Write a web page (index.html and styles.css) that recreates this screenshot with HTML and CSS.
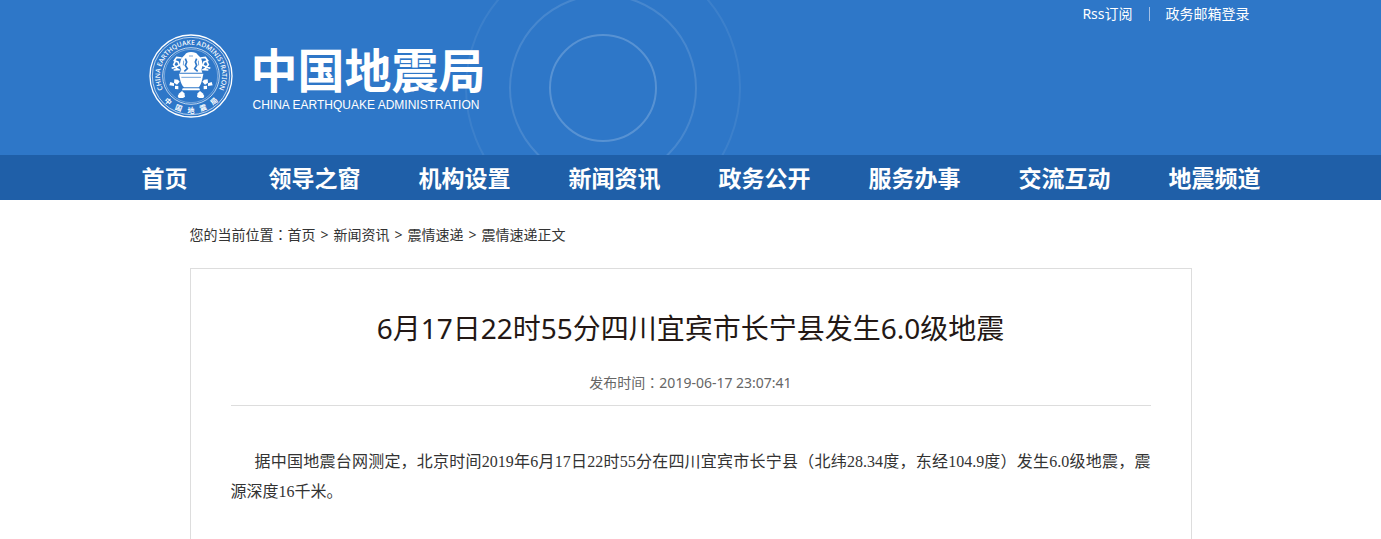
FILE: index.html
```html
<!DOCTYPE html>
<html lang="zh-CN">
<head>
<meta charset="utf-8">
<title>中国地震局</title>
<link rel="stylesheet" href="styles.css">
</head>
<body>
<header class="header">
  <svg class="ripples" viewBox="0 0 276 276" fill="none" stroke="#fff" stroke-width="2" aria-hidden="true">
    <circle cx="138" cy="138" r="53" opacity=".2"/>
    <circle cx="138" cy="138" r="93" opacity=".12"/>
    <circle cx="138" cy="138" r="137" opacity=".07"/>
  </svg>
  <div class="header-inner">
    <div class="top-links">
      <a href="#">Rss订阅</a><span class="divider"></span><a href="#">政务邮箱登录</a>
    </div>
    <a class="brand" href="#">
      <svg class="seal" viewBox="0 0 252 252" role="img" aria-label="中国地震局徽标">
        <defs>
          <path id="arc" d="M50 179 A93 93 0 1 1 202 179"/>
        </defs>
        <g fill="none" stroke="#fff">
          <circle cx="126" cy="126" r="123" stroke-width="4"/>
          <circle cx="126" cy="126" r="116" stroke-width="2"/>
          <circle cx="126" cy="126" r="85" stroke-width="3" opacity=".7"/>
          <circle cx="126" cy="126" r="80" stroke-width="2" opacity=".5"/>
        </g>
        <text class="seal-en"><textPath href="#arc" startOffset="50%" text-anchor="middle">CHINA EARTHQUAKE ADMINISTRATION</textPath></text>
        <g class="seal-cn" text-anchor="middle">
          <text x="126" y="236" transform="rotate(42 126 126)">中</text>
          <text x="126" y="236" transform="rotate(21 126 126)">国</text>
          <text x="126" y="236">地</text>
          <text x="126" y="236" transform="rotate(-21 126 126)">震</text>
          <text x="126" y="236" transform="rotate(-42 126 126)">局</text>
        </g>
        <g fill="#fff">
          <path d="M108 62 Q112 54 126 54 Q142 54 146 62 L156 72 Q164 92 157 108 L160 116 H92 L97 108 Q88 92 98 72Z"/>
          <path d="M90 119 H163 L160 135 Q155 155 149 160 H105 Q97 153 93 135Z"/>
          <path d="M101 163 H151 L153 169 H99Z"/>
          <path d="M99 171 L106 178 L108 188 L102 192 H89 L86 186 L91 178Z"/>
          <path d="M153 171 L146 178 L144 188 L150 192 H163 L166 186 L161 178Z"/>
          <path d="M76 136 L87 137 L92 143 L84 152 L75 146Z"/>
          <path d="M64 144 L75 148 L75 156 L61 154Z"/>
          <path d="M176 136 L165 137 L160 143 L168 152 L177 146Z"/>
          <path d="M188 144 L177 148 L177 156 L191 154Z"/>
          <path d="M78 155 L88 156 L88 166 L78 165Z"/>
          <path d="M174 155 L164 156 L164 166 L174 165Z"/>
        </g>
        <g fill="none" stroke="#fff" stroke-width="5">
          <path d="M98 72 L83 70 L76 80 L87 84 L91 94 L78 100 L89 107 L74 108"/>
          <path d="M154 72 L169 70 L176 80 L165 84 L161 94 L174 100 L163 107 L178 108"/>
          <path d="M80 80 L74 92 L80 99 L68 103 M172 80 L178 92 L172 99 L184 103"/>
        </g>
        <g fill="none" stroke="#2e77c8">
          <path d="M109 74 L113 84 L109 94 L115 104 L106 112 M143 74 L139 84 L143 94 L137 104 L146 112" stroke-width="5"/>
          <path d="M104 80 L103 94 M148 80 L149 94 M120 66 H132 M97 130 H156" stroke-width="2"/>
        </g>
      </svg>
      <span class="brand-text">
        <span class="brand-cn">中国地震局</span>
        <span class="brand-en">CHINA EARTHQUAKE ADMINISTRATION</span>
      </span>
    </a>
  </div>
</header>
<nav class="nav">
  <div class="nav-inner">
    <a href="#">首页</a>
    <a href="#">领导之窗</a>
    <a href="#">机构设置</a>
    <a href="#">新闻资讯</a>
    <a href="#">政务公开</a>
    <a href="#">服务办事</a>
    <a href="#">交流互动</a>
    <a href="#">地震频道</a>
  </div>
</nav>
<main class="main">
  <div class="crumbs">
    <span>您的当前位置<span class="colon" lang="zh-TW">：</span><a href="#">首页</a></span><span>&gt;</span><a href="#">新闻资讯</a><span>&gt;</span><a href="#">震情速递</a><span>&gt;</span><span>震情速递正文</span>
  </div>
  <article class="article">
    <h1>6月17日22时55分四川宜宾市长宁县发生6.0级地震</h1>
    <div class="meta">发布时间<span class="colon" lang="zh-TW">：</span>2019-06-17 23:07:41</div>
    <p>据中国地震台网测定，北京时间2019年6月17日22时55分在四川宜宾市长宁县（北纬28.34度，东经104.9度）发生6.0级地震，震源深度16千米。</p>
  </article>
</main>
</body>
</html>
```
FILE: styles.css
```css
* {
  box-sizing: border-box;
}

body {
  margin: 0;
  background: #fff;
  color: #333;
  font: 14px/20px "Noto Sans", "Noto Sans CJK SC", sans-serif;
}

a {
  color: inherit;
  text-decoration: none;
}

.colon {
  font-family: "Noto Sans CJK TC", sans-serif;
  line-height: 1;
}

.header {
  position: relative;
  overflow: hidden;
  background: #2e77c8;
  color: #fff;
}

.ripples {
  position: absolute;
  top: -50px;
  left: calc(50% - 226px);
  width: 276px;
}

.header-inner {
  position: relative;
  max-width: 1200px;
  margin: 0 auto;
  padding: 4px 41px 37px 58px;
}

.top-links {
  display: flex;
  justify-content: flex-end;
  align-items: center;
}

.divider {
  width: 1px;
  height: 14px;
  margin: 0 16px;
  background: #a3c0e6;
}

.brand {
  display: flex;
  gap: 18px;
  width: fit-content;
  margin-top: 10px;
}

.seal {
  width: 84px;
  height: 84px;
}

.seal-en {
  fill: #fff;
  font: 500 20px "Noto Sans", sans-serif;
}

.seal-cn {
  fill: #fff;
  font: bold 21px "Noto Sans CJK SC", sans-serif;
}

.brand-text {
  display: flex;
  flex-direction: column;
  padding-top: 7px;
}

.brand-cn {
  font: bold 47px/54px "Noto Sans CJK SC", sans-serif;
}

.brand-en {
  padding-left: 2px;
  font: 12px/20px "Liberation Sans", sans-serif;
}

.nav {
  background: #1f5fa8;
}

.nav-inner {
  display: flex;
  max-width: 1202px;
  margin: 0 auto;
}

.nav a {
  flex: 0 1 150px;
  color: #fff;
  font: bold 23px/45px "Noto Sans CJK SC", sans-serif;
  text-align: center;
  white-space: nowrap;
}

.main {
  max-width: 1002px;
  margin: 0 auto;
}

.crumbs {
  display: flex;
  gap: 5px;
  padding: 25px 0 23px;
}

.article {
  min-height: 271px;
  padding: 37px 40px;
  border: 1px solid #ddd;
  border-bottom: 0;
}

.article h1 {
  margin: 0;
  color: #231815;
  font-size: 28px;
  font-weight: 400;
  line-height: 44px;
  text-align: center;
}

.meta {
  padding: 23px 0 12px;
  border-bottom: 1px solid #ddd;
  color: #666;
  text-align: center;
}

.article p {
  margin: 41px 0 0;
  font: 16px/30px "Liberation Serif", "Noto Sans CJK SC", serif;
  text-align: justify;
  text-indent: 24px;
}
```
